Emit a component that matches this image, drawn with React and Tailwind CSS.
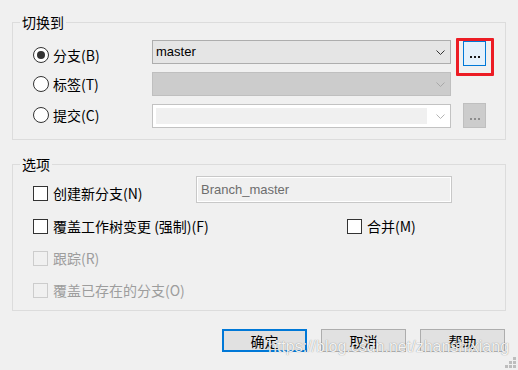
import React from "react";

const cjk = "font-['Noto_Sans_CJK_SC','Noto_Sans',sans-serif]";

function Chevron({ color }) {
  return (
    <svg width="9" height="5" viewBox="0 0 9 5" className="shrink-0">
      <path d="M0.5 0.5 L4.5 4.5 L8.5 0.5" fill="none" stroke={color} strokeWidth="1" />
    </svg>
  );
}

function Radio({ checked }) {
  return (
    <div className="w-[16px] h-[16px] rounded-full border border-[#333333] bg-white flex items-center justify-center shrink-0">
      {checked && <div className="w-[8px] h-[8px] rounded-full bg-[#333333]" />}
    </div>
  );
}

function Check({ disabled }) {
  return (
    <div
      className={
        disabled
          ? "w-[15px] h-[15px] border border-[#cccccc] bg-[#f0f0f0] shrink-0"
          : "w-[15px] h-[15px] border border-[#333333] bg-white shrink-0"
      }
    />
  );
}

function Dots({ color }) {
  return (
    <div className="flex gap-[1px] mt-[6px]">
      <div className="w-[2px] h-[2px]" style={{ background: color }} />
      <div className="w-[2px] h-[2px] ml-[1px]" style={{ background: color }} />
      <div className="w-[2px] h-[2px] ml-[1px]" style={{ background: color }} />
    </div>
  );
}

export default function App() {
  return (
    <div className={`relative w-[518px] h-[370px] bg-[#f0f0f0] px-[12px] pt-[22px] ${cjk} text-[14px] leading-[20px] text-black overflow-hidden`}>
      {/* Group 1 */}
      <div className="relative border border-[#dcdcdc] pt-[17px] pb-[11px] pl-[20px] flex flex-col gap-[8px]">
        <span className="absolute left-[7px] -top-[11px] px-[2px] bg-[#f0f0f0]">切换到</span>

        <div className="flex items-start h-[24px]">
          <div className="flex items-center gap-[4px] w-[119px] mt-[5px]">
            <Radio checked />
            <span>分支(B)</span>
          </div>
          <div className="w-[299px] h-[24px] border border-[#adadad] bg-[#e5e5e5] flex items-center pl-[3px] pr-[5px]">
            <span className="font-['Liberation_Sans',sans-serif] text-[13px] leading-[16px] text-[#000]">master</span>
            <div className="ml-auto"><Chevron color="#333333" /></div>
          </div>
          <div className="relative ml-[12px] mt-[1px] w-[23px] h-[25px] border border-[#0078d7] bg-[#e5f1fb] flex justify-center items-center">
            <Dots color="#1a1a1a" />
            <div className="absolute -left-[8px] -top-[4px] w-[38px] h-[38px] border-[3px] border-[#ec1c24] rounded-[1px]" />
          </div>
        </div>

        <div className="flex items-center h-[24px]">
          <div className="flex items-center gap-[4px] w-[119px]">
            <Radio />
            <span>标签(T)</span>
          </div>
          <div className="w-[299px] h-[24px] border border-[#bfbfbf] bg-[#cccccc] flex items-center pr-[5px]">
            <div className="ml-auto"><Chevron color="#a8a8a8" /></div>
          </div>
        </div>

        <div className="flex items-start h-[24px]">
          <div className="flex items-center gap-[4px] w-[119px] mt-[1px]">
            <Radio />
            <span>提交(C)</span>
          </div>
          <div className="w-[299px] h-[24px] border border-[#c2c2c2] bg-white flex items-center pl-[3px] pr-[5px]">
            <div className="w-[271px] h-[16px] bg-[#f0f0f0]" />
            <div className="ml-auto"><Chevron color="#b4b4b4" /></div>
          </div>
          <div className="ml-[12px] -mt-[1px] w-[23px] h-[25px] border border-[#bfbfbf] bg-[#cccccc] flex justify-center items-center">
            <Dots color="#8c8c8c" />
          </div>
        </div>
      </div>

      {/* Group 2 */}
      <div className="relative mt-[24px] border border-[#dcdcdc] pt-[11px] pb-[10px] pl-[20px] flex flex-col">
        <span className="absolute left-[7px] -top-[11px] px-[2px] bg-[#f0f0f0]">选项</span>

        <div className="flex items-end h-[27px]">
          <div className="flex items-center gap-[5px] w-[163px] h-[20px]">
            <Check />
            <span>创建新分支(N)</span>
          </div>
          <div className="w-[256px] h-[27px] border border-[#c8c8c8] shadow-[inset_0_0_0_1px_#ffffff] bg-[#f0f0f0] flex items-center pl-[4px]">
            <span className="font-['Liberation_Sans',sans-serif] text-[13px] leading-[16px] text-[#6d6d6d]">Branch_master</span>
          </div>
        </div>

        <div className="flex items-center h-[20px] mt-[13px]">
          <div className="flex items-center gap-[5px] w-[314px]">
            <Check />
            <span>覆盖工作树变更 (强制)(F)</span>
          </div>
          <div className="flex items-center gap-[5px]">
            <Check />
            <span>合并(M)</span>
          </div>
        </div>

        <div className="flex items-center h-[20px] mt-[12px] gap-[5px] text-[#9d9d9d]">
          <Check disabled />
          <span>跟踪(R)</span>
        </div>

        <div className="flex items-center h-[20px] mt-[12px] gap-[5px] text-[#9d9d9d]">
          <Check disabled />
          <span>覆盖已存在的分支(O)</span>
        </div>
      </div>

      {/* Buttons */}
      <div className="flex justify-end gap-[14px] mt-[18px] pr-[1px]">
        <div className="w-[85px] h-[23px] border-2 border-[#0078d7] bg-[#e1e1e1] flex items-center justify-center">确定</div>
        <div className="w-[85px] h-[23px] border border-[#adadad] bg-[#e1e1e1] flex items-center justify-center">取消</div>
        <div className="w-[85px] h-[23px] border border-[#adadad] bg-[#e1e1e1] flex items-center justify-center">帮助</div>
      </div>

      {/* Watermark */}
      <div className="absolute left-[268px] top-[338px] font-['Liberation_Sans',sans-serif] text-[16px] leading-[18px] text-white/90 [text-shadow:0_0_1px_rgba(0,0,0,0.5)] whitespace-nowrap">
        https://blog.csdn.net/zhanshixiang
      </div>

      {/* Grip */}
      <svg className="absolute left-[505px] top-[357px]" width="11" height="11" viewBox="0 0 11 11">
        <rect x="8" y="0" width="3" height="3" fill="#bdbdbd" />
        <rect x="4" y="4" width="3" height="3" fill="#bdbdbd" />
        <rect x="8" y="4" width="3" height="3" fill="#bdbdbd" />
        <rect x="0" y="8" width="3" height="3" fill="#bdbdbd" />
        <rect x="4" y="8" width="3" height="3" fill="#bdbdbd" />
        <rect x="8" y="8" width="3" height="3" fill="#bdbdbd" />
      </svg>
    </div>
  );
}
